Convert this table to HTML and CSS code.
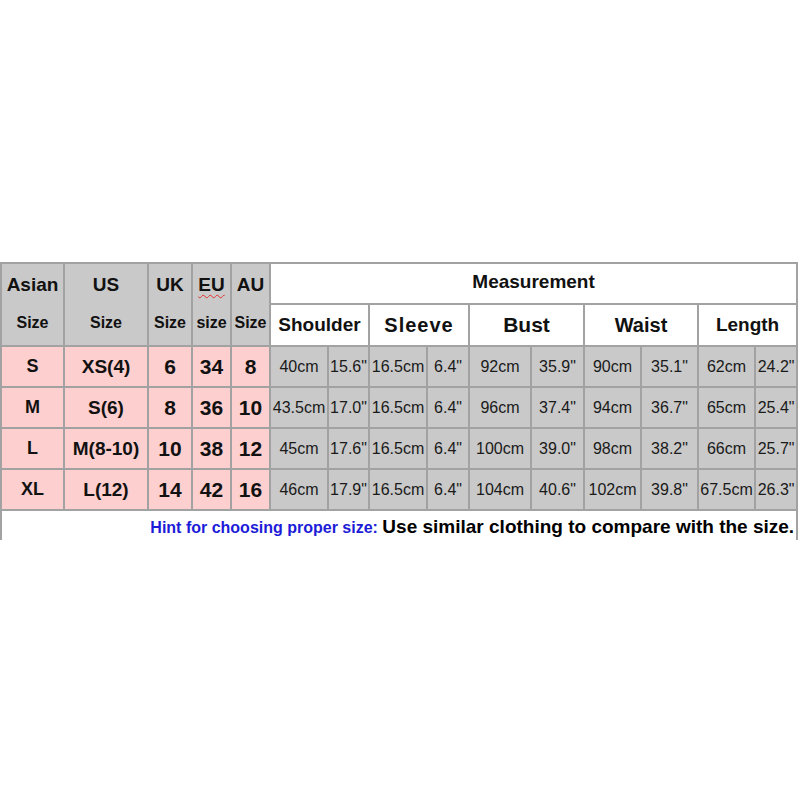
FILE: index.html
```html
<!DOCTYPE html>
<html>
<head>
<meta charset="utf-8">
<link rel="stylesheet" href="styles.css">
</head>
<body>
<div class="wrap">
<table class="chart">
  <colgroup>
    <col class="c64"><col class="c84"><col class="c44"><col class="c39"><col class="c39">
    <col class="c58"><col class="c41"><col class="c58"><col class="c42"><col class="c62">
    <col class="c53"><col class="c57"><col class="c57"><col class="c57"><col class="c43">
  </colgroup>
  <tr class="h1">
    <th rowspan="2" class="size-h"><span class="top">Asian</span><span class="sub">Size</span></th>
    <th rowspan="2" class="size-h"><span class="top">US</span><span class="sub">Size</span></th>
    <th rowspan="2" class="size-h"><span class="top">UK</span><span class="sub">Size</span></th>
    <th rowspan="2" class="size-h"><span class="top"><span class="spell">EU</span></span><span class="sub">size</span></th>
    <th rowspan="2" class="size-h"><span class="top">AU</span><span class="sub">Size</span></th>
    <th colspan="10" class="white meas">Measurement</th>
  </tr>
  <tr class="h2">
    <th colspan="2" class="white g">Shoulder</th>
    <th colspan="2" class="white g sleeve">Sleeve</th>
    <th colspan="2" class="white g bust">Bust</th>
    <th colspan="2" class="white g waist">Waist</th>
    <th colspan="2" class="white g">Length</th>
  </tr>
  <tr class="row">
    <td class="pink nm">S</td><td class="pink us">XS(4)</td><td class="pink num">6</td><td class="pink num">34</td><td class="pink num">8</td>
    <td>40cm</td><td>15.6"</td><td>16.5cm</td><td>6.4"</td><td>92cm</td><td>35.9"</td><td>90cm</td><td>35.1"</td><td>62cm</td><td>24.2"</td>
  </tr>
  <tr class="row">
    <td class="pink nm">M</td><td class="pink us">S(6)</td><td class="pink num">8</td><td class="pink num">36</td><td class="pink num">10</td>
    <td>43.5cm</td><td>17.0"</td><td>16.5cm</td><td>6.4"</td><td>96cm</td><td>37.4"</td><td>94cm</td><td>36.7"</td><td>65cm</td><td>25.4"</td>
  </tr>
  <tr class="row">
    <td class="pink nm">L</td><td class="pink us">M(8-10)</td><td class="pink num">10</td><td class="pink num">38</td><td class="pink num">12</td>
    <td>45cm</td><td>17.6"</td><td>16.5cm</td><td>6.4"</td><td>100cm</td><td>39.0"</td><td>98cm</td><td>38.2"</td><td>66cm</td><td>25.7"</td>
  </tr>
  <tr class="row">
    <td class="pink nm">XL</td><td class="pink us">L(12)</td><td class="pink num">14</td><td class="pink num">42</td><td class="pink num">16</td>
    <td>46cm</td><td>17.9"</td><td>16.5cm</td><td>6.4"</td><td>104cm</td><td>40.6"</td><td>102cm</td><td>39.8"</td><td>67.5cm</td><td>26.3"</td>
  </tr>
  <tr class="hint">
    <td colspan="15"><span class="blue">Hint for choosing proper size:</span> <span class="black">Use similar clothing to compare with the size.</span></td>
  </tr>
</table>
</div>
</body>
</html>
```

FILE: styles.css
```css
html, body {
  margin: 0;
  padding: 0;
  background: #ffffff;
}
body {
  font-family: "Liberation Sans", Arial, sans-serif;
  color: #111111;
}
.wrap {
  padding-top: 262px;
  width: 800px;
}
.chart {
  border-collapse: collapse;
  table-layout: fixed;
  width: 798px;
}
.c64 { width: 63px; }
.c84 { width: 84px; }
.c44 { width: 44px; }
.c39 { width: 39px; }
.c58 { width: 58px; }
.c41 { width: 41px; }
.c42 { width: 42px; }
.c62 { width: 62px; }
.c53 { width: 53px; }
.c57 { width: 57px; }
.c43 { width: 42px; }

.chart th, .chart td {
  border: 2px solid #a2a2a2;
  padding: 0;
  text-align: center;
  vertical-align: middle;
  overflow: visible;
  white-space: nowrap;
  background: #c9c9c9;
}
.h1 { height: 41px; }
.h2 { height: 42px; }
.row { height: 41px; }

.size-h {
  font-weight: bold;
}
.size-h .top {
  display: block;
  font-size: 19px;
  line-height: 22px;
  margin-bottom: 17px;
  margin-top: -2px;
}
.size-h .sub {
  display: block;
  font-size: 16px;
  line-height: 20px;
}
.spell {
  text-decoration: underline wavy #e03030;
  text-decoration-thickness: 1px;
  text-underline-offset: 3px;
}
.white {
  background: #ffffff !important;
}
.meas {
  font-size: 19px;
  font-weight: bold;
  padding-bottom: 3px !important;
}
.g {
  font-size: 19px;
  font-weight: bold;
}
.sleeve {
  font-size: 20px;
  letter-spacing: 1px;
}
.bust { font-size: 21px; }
.waist { font-size: 20px; }

.chart td {
  font-size: 16px;
  color: #1a1a1a;
}
.chart td.pink {
  background: #fdcfcf;
  font-weight: bold;
  color: #111111;
}
.nm { font-size: 18px !important; }
.us { font-size: 19px !important; }
.num { font-size: 21px !important; }

.chart .hint td {
  background: #ffffff;
  border-bottom: none;
  text-align: right;
  padding: 4px 2px 0 0;
  height: 25px;
  line-height: 24px;
}
.blue {
  color: #1c1cd8;
  font-size: 16px;
  font-weight: bold;
}
.black {
  color: #000000;
  font-size: 19px;
  font-weight: bold;
}
```
